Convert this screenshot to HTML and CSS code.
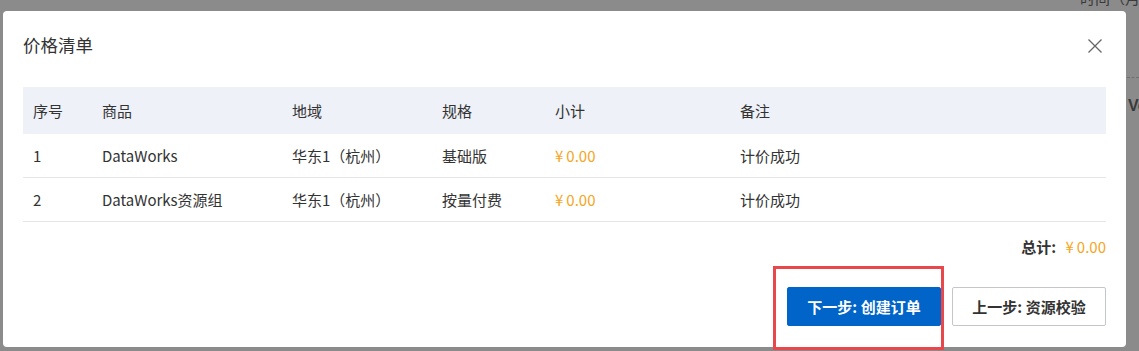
FILE: index.html
```html
<!DOCTYPE html>
<html lang="zh-CN">
<head>
    <meta charset="UTF-8">
    <title>价格清单</title>
    <link rel="stylesheet" href="styles.css">
</head>
<body>
    <div class="backdrop-text backdrop-time">时间（月</div>
    <div class="backdrop-line"></div>
    <div class="backdrop-text backdrop-ver">Ve</div>

    <div class="dialog">
        <div class="dialog-header">
            <span class="dialog-title">价格清单</span>
            <svg class="dialog-close" width="16" height="16" viewBox="0 0 16 16">
                <path d="M1.5 1.5 L14.5 14.5 M14.5 1.5 L1.5 14.5" stroke="#666" stroke-width="1.3" fill="none"/>
            </svg>
        </div>

        <table class="price-table">
            <colgroup>
                <col style="width:69px">
                <col style="width:190px">
                <col style="width:150px">
                <col style="width:113px">
                <col style="width:185px">
                <col>
            </colgroup>
            <thead>
                <tr>
                    <th>序号</th>
                    <th>商品</th>
                    <th>地域</th>
                    <th>规格</th>
                    <th>小计</th>
                    <th>备注</th>
                </tr>
            </thead>
            <tbody>
                <tr>
                    <td>1</td>
                    <td>DataWorks</td>
                    <td>华东1（杭州）</td>
                    <td>基础版</td>
                    <td class="price">¥<span>0.00</span></td>
                    <td>计价成功</td>
                </tr>
                <tr>
                    <td>2</td>
                    <td>DataWorks资源组</td>
                    <td>华东1（杭州）</td>
                    <td>按量付费</td>
                    <td class="price">¥<span>0.00</span></td>
                    <td>计价成功</td>
                </tr>
            </tbody>
        </table>

        <div class="total">
            <span class="total-label">总计:</span>
            <span class="price">¥<span>0.00</span></span>
        </div>

        <div class="dialog-footer">
            <button class="btn btn-primary">下一步: 创建订单</button>
            <button class="btn btn-normal">上一步: 资源校验</button>
        </div>
    </div>

    <div class="highlight"></div>
</body>
</html>
```

FILE: styles.css
```css
body {
    margin: 0;
    background: #8b8b8b;
    font-family: "Noto Sans CJK SC", "Noto Sans", sans-serif;
    color: #333;
    height: 351px;
    overflow: hidden;
    position: relative;
}
.backdrop-text {
    position: absolute;
    color: #3a3a3a;
    font-size: 15px;
    white-space: nowrap;
}
.backdrop-time {
    left: 1080px;
    top: -13px;
}
.backdrop-ver {
    left: 1128px;
    top: 97px;
    font-weight: bold;
    font-family: "Liberation Sans", sans-serif;
    font-size: 16px;
}
.backdrop-line {
    position: absolute;
    left: 1127px;
    top: 77px;
    width: 12px;
    border-top: 1px dashed #707070;
}
.dialog {
    position: relative;
    margin: 11px 0 0 3px;
    width: 1123px;
    height: 336px;
    box-sizing: border-box;
    padding: 0 20px;
    background: #fff;
    border-radius: 4px;
}
.dialog-header {
    height: 76px;
    display: flex;
    align-items: flex-start;
    justify-content: space-between;
}
.dialog-title {
    margin-top: 21px;
    font-size: 17.5px;
    line-height: 26px;
    color: #333;
}
.dialog-close {
    margin-top: 27px;
    margin-right: 3px;
}
.price-table {
    width: 100%;
    border-collapse: collapse;
    table-layout: fixed;
    font-size: 15px;
}
.price-table th {
    background: #eef1f7;
    font-weight: normal;
    text-align: left;
    height: 47px;
    padding: 0 10px;
    color: #333;
}
.price-table td {
    height: 43px;
    padding: 0 10px;
    border-bottom: 1px solid #e3e5e8;
    color: #333;
}
.price-table td.price,
.price {
    color: #f5a623;
}
.price span {
    margin-left: 3px;
}
.total {
    margin-top: 14px;
    text-align: right;
    font-size: 15px;
    line-height: 22px;
}
.total-label {
    font-weight: bold;
    margin-right: 6px;
}
.dialog-footer {
    margin-top: 29px;
    display: flex;
    justify-content: flex-end;
    gap: 11px;
}
.btn {
    height: 39px;
    width: 154px;
    font-family: inherit;
    font-size: 15px;
    font-weight: bold;
    border-radius: 2px;
    cursor: pointer;
}
.btn-primary {
    background: #0064c8;
    border: 1px solid #0064c8;
    color: #fff;
}
.btn-normal {
    background: #fff;
    border: 1px solid #c4c6cc;
    color: #333;
}
.highlight {
    position: absolute;
    left: 773px;
    top: 266px;
    width: 165px;
    height: 78px;
    border: 3px solid #e8474b;
}
```
